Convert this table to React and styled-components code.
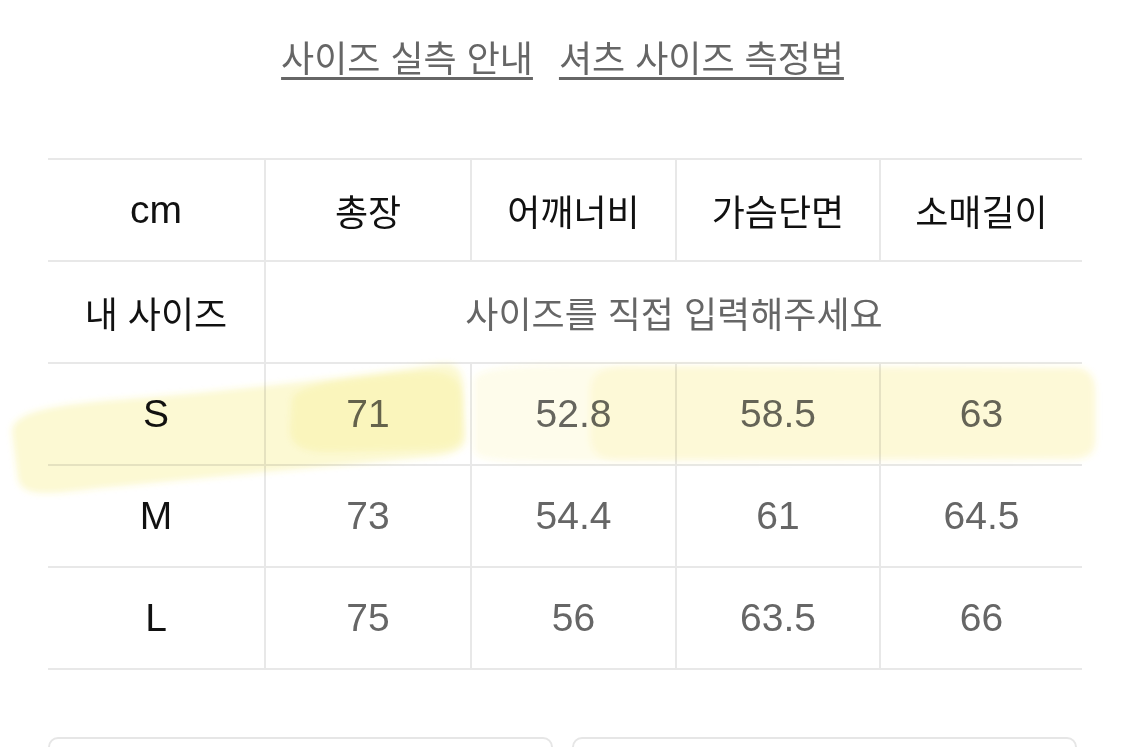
import React from 'react';
import styled, { createGlobalStyle } from 'styled-components';

const GlobalStyle = createGlobalStyle`
    html, body {
        margin: 0;
        padding: 0;
        background: #ffffff;
        overflow: hidden;
    }
    body {
        font-family: "Liberation Sans", "Noto Sans CJK KR", sans-serif;
    }
`;

const headers = ['총장', '어깨너비', '가슴단면', '소매길이'];
const sizes = [
    { label: 'S', values: ['71', '52.8', '58.5', '63'] },
    { label: 'M', values: ['73', '54.4', '61', '64.5'] },
    { label: 'L', values: ['75', '56', '63.5', '66'] },
];

export default function App() {
    return (
        <Page>
            <GlobalStyle />
            <LinkBar>
                <GuideLink>사이즈 실측 안내</GuideLink>
                <GuideLink>셔츠 사이즈 측정법</GuideLink>
            </LinkBar>
            <Table>
                <Cell $head>cm</Cell>
                {headers.map((h, i) => (
                    <Cell key={h} $head $ko $last={i === headers.length - 1}>{h}</Cell>
                ))}
                <Cell $head $ko>내 사이즈</Cell>
                <Cell $ko $span={4} $last>사이즈를 직접 입력해주세요</Cell>
                {sizes.map(row => (
                    <React.Fragment key={row.label}>
                        <Cell $head>{row.label}</Cell>
                        {row.values.map((v, i) => (
                            <Cell key={i} $last={i === row.values.length - 1}>{v}</Cell>
                        ))}
                    </React.Fragment>
                ))}
            </Table>
            <ButtonRow>
                <GhostBox />
                <GhostBox />
            </ButtonRow>
            {/* highlighter marks drawn over the S row */}
            <Highlight viewBox="0 0 1125 747" preserveAspectRatio="none">
                <defs>
                    <filter id="soft" x="-5%" y="-20%" width="110%" height="140%">
                        <feGaussianBlur stdDeviation="3" />
                    </filter>
                </defs>
                <g filter="url(#soft)">
                    <path
                        d="M12 432 C 12 410, 60 404, 140 398 C 240 390, 340 378, 440 364 C 458 362, 464 372, 464 390 L 466 436 C 466 450, 455 456, 420 458 C 330 466, 200 478, 100 488 C 50 494, 24 498, 18 480 Z"
                        fill="#f3e53c"
                        fillOpacity="0.22"
                    />
                    <path
                        d="M292 398 C 300 384, 350 378, 420 372 C 452 370, 462 380, 462 400 L 462 432 C 462 446, 450 450, 420 450 L 330 452 C 300 452, 290 444, 290 430 Z"
                        fill="#f3e53c"
                        fillOpacity="0.16"
                    />
                    <path
                        d="M474 380 C 476 370, 500 366, 560 365 L 1075 367 C 1090 368, 1096 378, 1096 392 L 1096 442 C 1096 456, 1086 460, 1070 460 L 560 462 C 500 462, 474 460, 474 450 Z"
                        fill="#f3e53c"
                        fillOpacity="0.1"
                    />
                    <path
                        d="M590 392 C 590 374, 600 366, 630 366 L 1075 368 C 1090 368, 1095 378, 1095 392 L 1095 438 C 1095 452, 1086 458, 1070 458 L 620 460 C 598 460, 590 452, 590 436 Z"
                        fill="#f3e53c"
                        fillOpacity="0.11"
                    />
                </g>
            </Highlight>
        </Page>
    );
}

const Page = styled.div`
    position: relative;
    width: 1125px;
    height: 747px;
    overflow: hidden;
    background: #ffffff;
`;

const LinkBar = styled.div`
    height: 112px;
    display: flex;
    align-items: center;
    justify-content: center;
    gap: 26px;
`;

const GuideLink = styled.a`
    font-size: 36px;
    color: #666666;
    text-decoration: underline;
    text-decoration-thickness: 3px;
    text-underline-offset: 5px;
    cursor: pointer;
`;

const Table = styled.div`
    margin: 46px 43px 0 48px;
    display: grid;
    grid-template-columns: 218px 206px 205px 204px 1fr;
    border-top: 2px solid #e8e8e8;
`;

const Cell = styled.div`
    grid-column: span ${props => props.$span || 1};
    height: 100px;
    display: flex;
    align-items: center;
    justify-content: center;
    border-bottom: 2px solid #e8e8e8;
    border-right: ${props => props.$last ? 'none' : '2px solid #e8e8e8'};
    font-size: ${props => props.$ko ? '36px' : '39px'};
    color: ${props => props.$head ? '#111111' : '#666666'};
    white-space: nowrap;
`;

const ButtonRow = styled.div`
    margin: 67px 48px 0;
    display: grid;
    grid-template-columns: 1fr 1fr;
    gap: 19px;
`;

const GhostBox = styled.div`
    height: 60px;
    border: 2px solid #e6e6e6;
    border-radius: 10px;
`;

const Highlight = styled.svg`
    position: absolute;
    inset: 0;
    width: 1125px;
    height: 747px;
    pointer-events: none;
    mix-blend-mode: multiply;
`;
